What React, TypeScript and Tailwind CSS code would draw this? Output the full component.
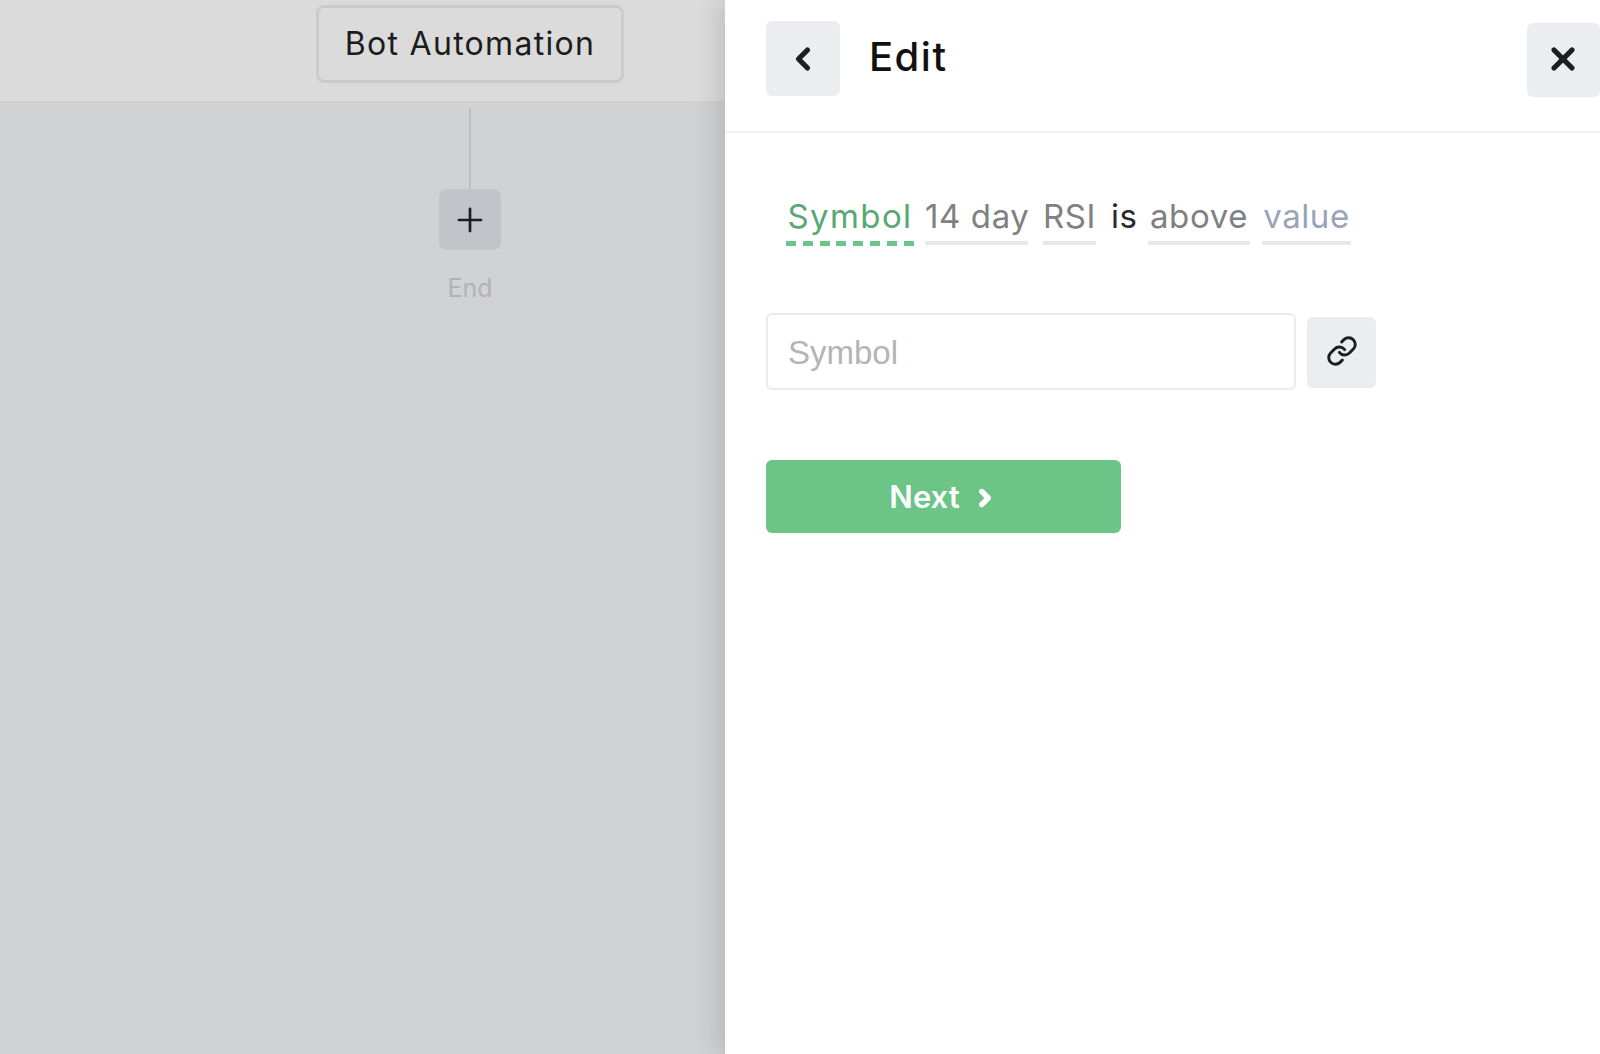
import { ChevronLeft, ChevronRight, Link, Plus, X } from "lucide-react";
import React from "react";

const tokens = [
  { label: "14 day", width: "w-[103px]", color: "text-[#808080]", mr: "mr-[15px]" },
  { label: "RSI", width: "w-[53px]", color: "text-[#808080]", mr: "mr-[15px]" },
];

function App() {
  return (
    <div className="flex h-screen w-full overflow-hidden bg-white font-['Inter',sans-serif]">
      <div className="flex w-[725px] shrink-0 flex-col bg-[#d1d2d4]">
        <div className="h-[103px] shrink-0 border-b-2 border-[#d0cfd1] bg-[#dbdbdb] pl-[316px] pt-[5px]">
          <div className="flex h-[78px] w-[308px] items-center justify-center rounded-lg border-[3px] border-[#cbcbcb] text-[32px] tracking-[1.3px] text-[#1c1c1c]">
            Bot Automation
          </div>
        </div>
        <div className="ml-[316px] flex w-[307px] flex-col items-center pt-[5px]">
          <div className="h-[81px] w-[2px] bg-[#bcbdbf]" />
          <button className="flex h-[61px] w-[62px] items-center justify-center rounded-lg bg-[#c3c4c9] text-[#1c1e22]">
            <Plus size={38} strokeWidth={1.7} />
          </button>
          <span className="mt-[20px] ml-[1px] text-[25px] text-[#b1b2b4]">End</span>
        </div>
      </div>

      <div className="relative flex flex-1 flex-col bg-white shadow-[-6px_0_26px_rgba(0,0,0,0.14)]">
        <div className="flex h-[133px] shrink-0 items-start border-b-2 border-[#f2f2f4] pl-[41px] pt-[21px]">
          <button className="flex h-[75px] w-[74px] items-center justify-center rounded-md bg-[#ecedf0] text-[#1c1e22]">
            <ChevronLeft size={36} strokeWidth={3.5} />
          </button>
          <h1 className="ml-[29px] mt-[14px] text-[40px] leading-[44px] font-medium tracking-[1.5px] text-[#111111]">Edit</h1>
          <button className="ml-auto mt-[2px] flex h-[74px] w-[73px] items-center justify-center rounded-md bg-[#ecedf0] pb-[3px] pr-[1px] text-[#1c1e22]">
            <X size={36} strokeWidth={3.5} />
          </button>
        </div>

        <div className="flex flex-col items-start pl-[41px]">
          <div className="ml-[20px] mt-[58px] flex items-start text-[33px] leading-[50px] tracking-[0.6px]">
            <div className="mr-[11px] w-[128px]">
              <div className="text-center tracking-[1.4px] text-[#58a872]">Symbol</div>
              <div className="h-[5px] bg-[repeating-linear-gradient(90deg,#6cc486_0,#6cc486_10px,transparent_10px,transparent_16.8px)]" />
            </div>
            {tokens.map((t) => (
              <div key={t.label} className={`${t.mr} ${t.width}`}>
                <div className={`text-center whitespace-nowrap ${t.color}`}>{t.label}</div>
                <div className="h-[4px] bg-[#e8e8ea]" />
              </div>
            ))}
            <div className="mr-[13px] w-[24px] text-center text-[#2a2a2a]">is</div>
            <div className="mr-[12px] w-[102px]">
              <div className="text-center text-[#808080]">above</div>
              <div className="h-[4px] bg-[#e8e8ea]" />
            </div>
            <div className="w-[89px]">
              <div className="text-center text-[#98a4b8]">value</div>
              <div className="h-[4px] bg-[#e8e8ea]" />
            </div>
          </div>

          <div className="mt-[67px] flex items-center">
            <input
              placeholder="Symbol"
              className="h-[77px] w-[530px] rounded-md border-2 border-[#ebebed] px-[20px] pt-[2px] font-['Liberation_Sans',sans-serif] text-[33px] outline-none placeholder:text-[#b4b4b6]"
            />
            <button className="ml-[11px] mt-[2px] flex h-[71px] w-[69px] items-center justify-center rounded-md bg-[#ecedf0] pb-[4px] text-[#1c1e22]">
              <Link size={32} strokeWidth={2.2} />
            </button>
          </div>

          <button className="mt-[70px] flex h-[73px] w-[355px] items-center justify-center gap-[12px] rounded-md bg-[#6cc486] pt-[2px] text-[31px] font-semibold text-white">
            Next
            <ChevronRight size={26} strokeWidth={5} />
          </button>
        </div>
      </div>
    </div>
  );
}

export default App;
